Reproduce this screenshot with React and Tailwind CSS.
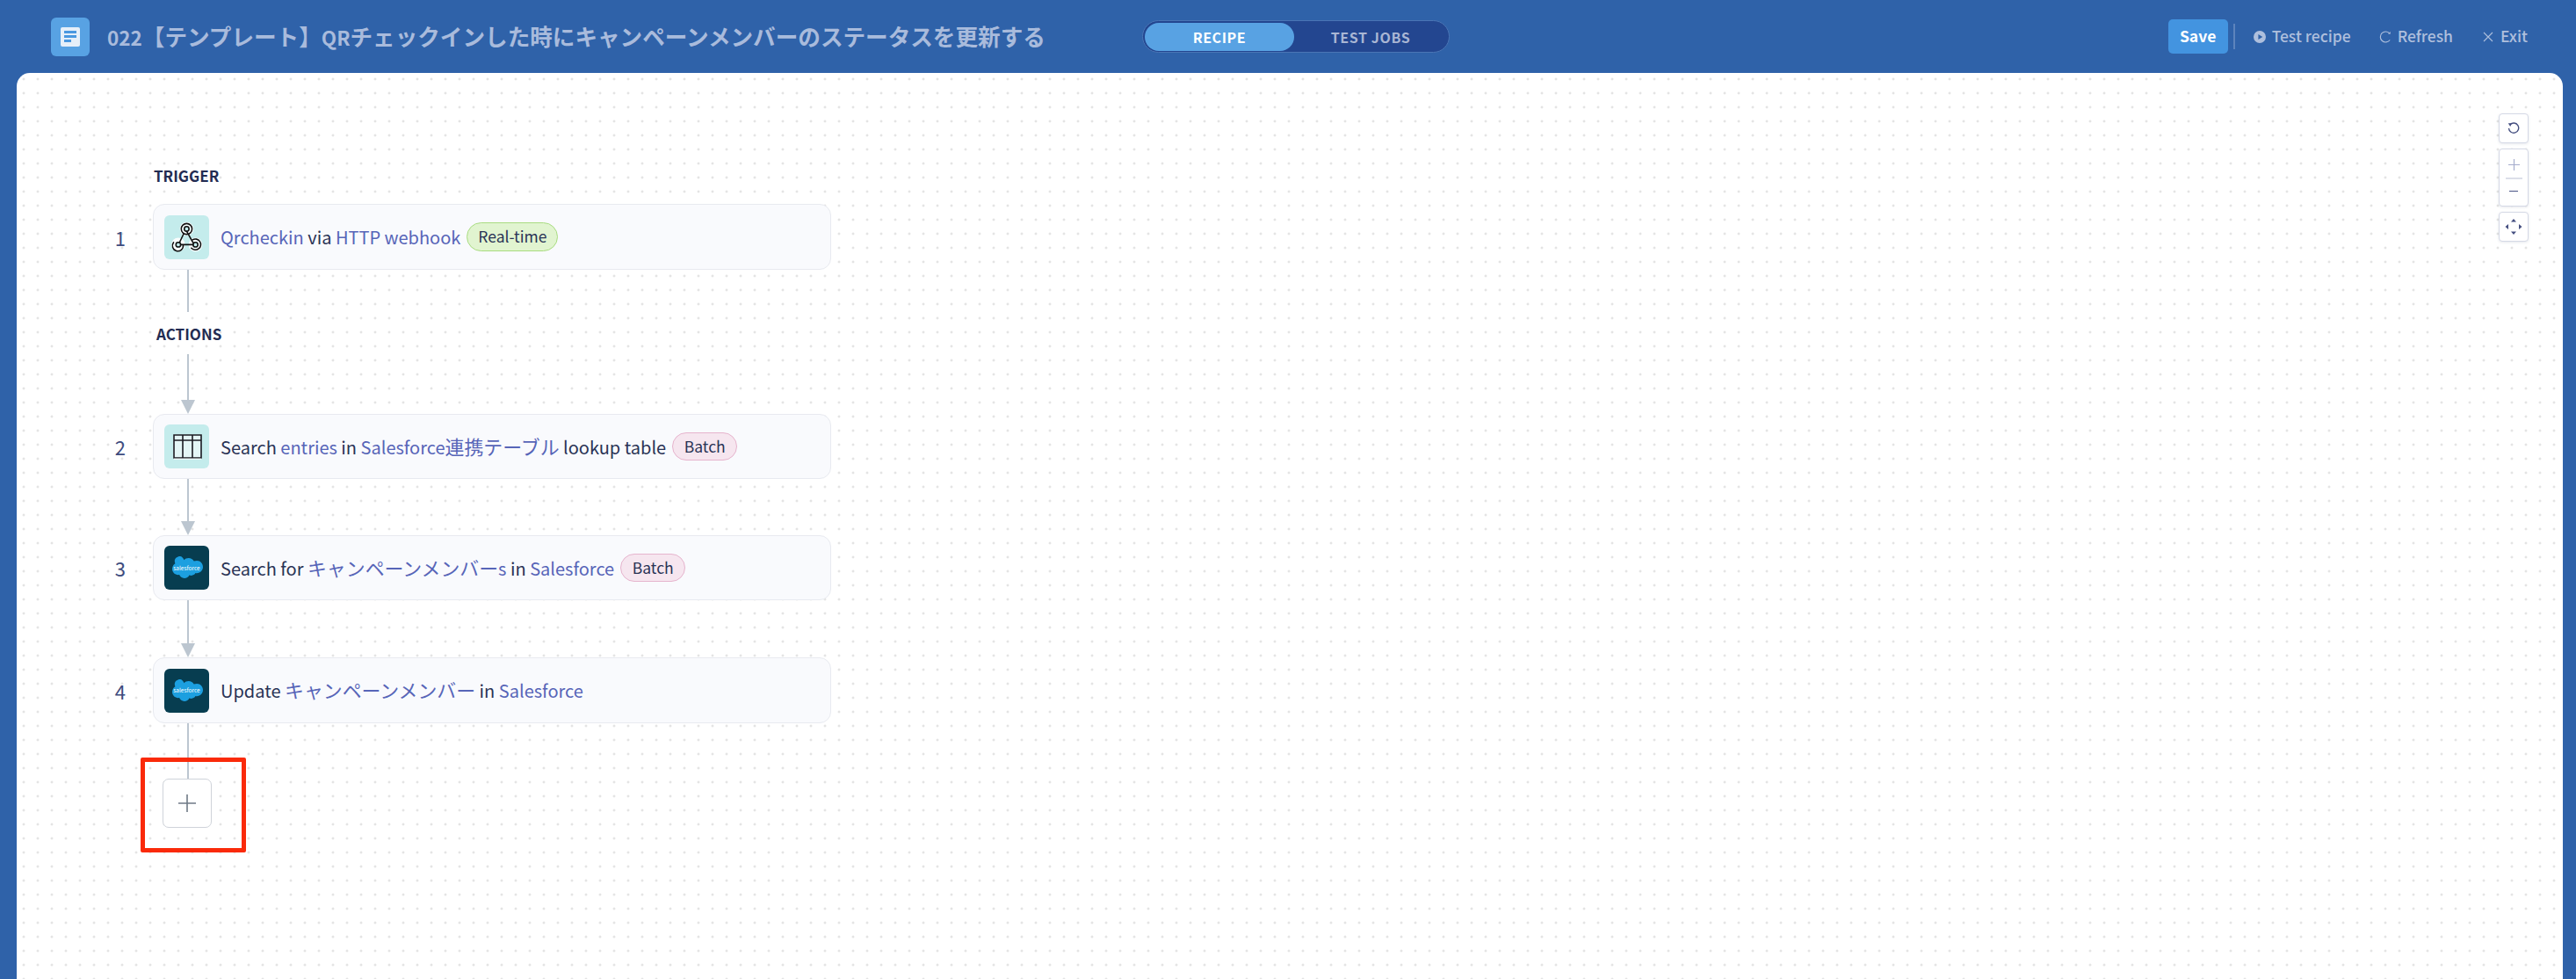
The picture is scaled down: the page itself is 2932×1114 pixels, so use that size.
import React from "react";

const FONT = "font-['Noto_Sans_CJK_JP','Noto_Sans',sans-serif]";

function Link({ children }) {
  return <span className="text-[#5765b8]">{children}</span>;
}

function J({ children }) {
  return <span className="text-[21.9px]">{children}</span>;
}

function TJ({ children }) {
  return <span className="text-[25.6px]">{children}</span>;
}

function Pill({ children, kind }) {
  const cls =
    kind === "green"
      ? "bg-[#e1f4d0] border-[#a8dc80] w-[104px] h-[33px]"
      : "bg-[#f6e6ef] border-[#e6b4cd] w-[74px] h-[32px]";
  return (
    <span className={`ml-[7px] inline-flex shrink-0 items-center justify-center rounded-full border-[1.5px] text-[17.5px] text-[#2a3355] ${cls}`}>
      {children}
    </span>
  );
}

function WebhookIcon() {
  return (
    <svg width="38" height="38" viewBox="0 0 34 34" fill="none">
      <g stroke="#ffffff" strokeWidth="4" opacity="0.9">
        <circle cx="16.5" cy="8.5" r="5" />
        <circle cx="8" cy="24.5" r="5" />
        <circle cx="25.5" cy="24.5" r="5" />
      </g>
      <g stroke="#111" strokeWidth="1.4" strokeLinecap="round">
        <circle cx="16.5" cy="8.5" r="5.5" />
        <circle cx="16.5" cy="8.5" r="2.4" />
        <path d="M3.2 22.2A5.5 5.5 0 1 0 13 25" />
        <circle cx="8" cy="24.5" r="2.4" />
        <path d="M22.5 19.6A5.5 5.5 0 1 1 21.3 28" />
        <circle cx="25.5" cy="24.5" r="2.4" />
        <path d="M10.4 24.5H23M16.5 10.9L23 22.5M13.5 13.4L9.2 22.4" />
      </g>
    </svg>
  );
}

function TableIcon() {
  return (
    <svg width="34" height="30" viewBox="0 0 34 30" fill="none">
      <rect x="1" y="1.5" width="31.5" height="27" fill="#ffffff" opacity="0.55" />
      <path d="M2 2H33V28H2ZM2 8H33M12 2V28M23 2V28" stroke="#1b1b22" strokeWidth="1.6" />
      <path d="M2 29.2H33" stroke="#ffffff" strokeWidth="1" />
    </svg>
  );
}

function SalesforceIcon() {
  return (
    <div className="relative flex h-[26px] w-[36px] items-center justify-center">
      <svg width="36" height="26" viewBox="0 0 36 26" className="absolute inset-0">
        <path
          d="M14.5 4.2C15.8 2.8 17.6 2 19.6 2c2.6 0 4.9 1.4 6.1 3.6 1-.5 2.2-.7 3.4-.7 4.1 0 6.9 3.3 6.9 7.2s-3 7.2-7 7.2c-.5 0-1-.1-1.5-.2-.9 1.700-2.700 2.800-4.800 2.800-.8 0-1.600-.2-2.300-.5C19.500 23.500 17.300 25 14.800 25c-2.600 0-4.800-1.600-5.700-3.900-.4.1-.8.1-1.200.1C4.100 21.200 1 18.100 1 14.300c0-2.600 1.400-4.800 3.400-6C4 7.300 3.800 6.300 3.800 5.300 3.800 2.400 6.900 0 10 0c1.800 0 3.400 1.700 4.500 4.200z"
          fill="#1c9fe0"
        />
      </svg>
      <span className="relative text-[6.5px] leading-none text-white">salesforce</span>
    </div>
  );
}

function Card({ n, icon, iconBg, h = "h-[74px]", pill, children }) {
  return (
    <div className="flex items-center">
      <div className="w-[74px] pr-[31px] text-right text-[22px] leading-none text-[#3e4c7e]">{n}</div>
      <div className={`flex w-[772px] items-center rounded-[13px] border-[1.5px] border-[#e8eaf0] bg-[#f9fafd] pl-[12px] ${h}`}>
        <div className={`flex h-[50px] w-[51px] shrink-0 items-center justify-center rounded-[6px] ${iconBg}`}>{icon}</div>
        <div className="ml-[13px] flex items-center text-[20px] text-[#2a3355]">
          <span className="whitespace-pre">{children}</span>
          {pill}
        </div>
      </div>
    </div>
  );
}

function Line({ h }) {
  return <div className={`ml-[113px] w-[2px] bg-[#bcc6d0] ${h}`} />;
}

function Arrow() {
  return (
    <svg width="16" height="16" viewBox="0 0 16 16" className="ml-[106px] block">
      <path d="M0 0H16L8 16Z" fill="#bcc6d0" />
    </svg>
  );
}

function Label({ children, className }) {
  return (
    <div className={`flex h-[24px] items-center text-[17px] font-bold leading-none text-[#232c52] ${className}`}>
      {children}
    </div>
  );
}

function Ctl({ children, h = "h-[34px]" }) {
  return (
    <div className={`flex w-[34px] flex-col items-center justify-center rounded-[4px] border-[1.5px] border-[#d5d9e6] bg-white shadow-[0_1px_3px_rgba(60,70,110,0.12)] ${h}`}>
      {children}
    </div>
  );
}

export default function App() {
  return (
    <div className={`h-[1114px] w-[2932px] overflow-hidden bg-[#2f62a9] ${FONT}`}>
      <header className="flex h-[83px] items-center">
        <div className="flex w-[1300px] items-center pl-[58px]">
          <div className="flex h-[44px] w-[44px] items-center justify-center rounded-[6px] bg-[#58a2e3]">
            <div className="flex h-[22px] w-[22px] flex-col justify-center gap-[2px] rounded-[2px] bg-[#e6eff9] pl-[4px]">
              <div className="h-[3px] w-[14px] bg-[#4a98e0]" />
              <div className="h-[3px] w-[14px] bg-[#4a98e0]" />
              <div className="h-[3px] w-[8px] bg-[#4a98e0]" />
            </div>
          </div>
          <div className="ml-[20px] whitespace-pre text-[22.5px] font-bold text-[#a9bbdc]">
            022<TJ>【テンプレート】</TJ>QR<TJ>チェックインした時にキャンペーンメンバーのステータスを更新する</TJ>
          </div>
        </div>
        <div className="flex h-[37px] w-[350px] items-center rounded-full border border-[#4a75b5] bg-[#234690] p-[2px]">
          <div className="flex h-[32px] w-[170px] items-center justify-center rounded-full bg-[#58a2e3] text-[16px] font-bold tracking-[0.6px] text-white">
            RECIPE
          </div>
          <div className="flex flex-1 items-center justify-center text-[16px] font-bold tracking-[0.6px] text-[#a9b6d4]">
            TEST JOBS
          </div>
        </div>
        <div className="ml-auto flex items-center pr-[55px] text-[17.5px] font-medium text-[#aebfdd]">
          <div className="flex h-[39px] w-[68px] items-center justify-center rounded-[5px] bg-[#4394e0] font-bold text-white">Save</div>
          <div className="ml-[6px] h-[29px] w-[2px] bg-[#5d84bd]" />
          <svg width="14" height="14" viewBox="0 0 14 14" className="ml-[21px]">
            <path fillRule="evenodd" d="M7 0a7 7 0 1 0 0 14A7 7 0 0 0 7 0ZM5.4 3.9v6.2L10.3 7Z" fill="#aebfdd" />
          </svg>
          <span className="ml-[7px]">Test recipe</span>
          <svg width="14" height="14" viewBox="0 0 14 14" fill="none" className="ml-[32px]">
            <path d="M12 3.2A6 6 0 1 0 12.2 10.5" stroke="#aebfdd" strokeWidth="1.2" />
            <path d="M9.8 3.8H13V.8" fill="#aebfdd" opacity="0.7" />
          </svg>
          <span className="ml-[7px]">Refresh</span>
          <svg width="12" height="12" viewBox="0 0 12 12" fill="none" className="ml-[34px]">
            <path d="M1 1L11 11M11 1L1 11" stroke="#aebfdd" strokeWidth="1.1" />
          </svg>
          <span className="ml-[8px]">Exit</span>
        </div>
      </header>

      <main className="relative ml-[19px] mr-[15px] h-[1031px] rounded-t-[15px] bg-white bg-[radial-gradient(circle,#e4e4e4_1.3px,transparent_1.7px)] bg-[size:16px_16px] bg-[position:0_-1px] pt-[104px]">
        <div className="absolute right-[39px] top-[46px] flex flex-col gap-[6px]">
          <Ctl>
            <svg width="14" height="14" viewBox="0 0 14 14" fill="none">
              <path d="M3 2.800A5.600 5.600 0 1 1 1.500 7" stroke="#454f80" strokeWidth="1.4" />
              <path d="M.8 1.200L5 1.200L3.200 5Z" fill="#454f80" />
            </svg>
          </Ctl>
          <Ctl h="h-[66px]">
            <svg width="13" height="13" viewBox="0 0 13 13">
              <path d="M6.500 0V13M0 6.500H13" stroke="#a6aecd" strokeWidth="1.2" />
            </svg>
            <div className="my-[8px] h-[1.5px] w-[19px] bg-[#dcdfe9]" />
            <div className="my-[5px] h-[1.5px] w-[10px] bg-[#4a5585]" />
          </Ctl>
          <Ctl>
            <svg width="20" height="20" viewBox="0 0 20 20" fill="#454f80">
              <path d="M10 1L13 4.500H7ZM10 19L13 15.500H7ZM.5 10L4 7V13ZM19.500 10L16 7V13Z" />
            </svg>
          </Ctl>
        </div>

        <div className="ml-[81px]">
          <Label className="ml-[75px]">TRIGGER</Label>
          <div className="mt-[21px]">
            <Card n="1" h="h-[75px]" iconBg="bg-[#c4ecec]" icon={<WebhookIcon />} pill={<Pill kind="green">Real-time</Pill>}>
              <Link>Qrcheckin</Link> via <Link>HTTP webhook</Link>
            </Card>
          </div>
          <Line h="h-[48px]" />
          <Label className="ml-[78px] mt-[12px]">ACTIONS</Label>
          <div className="mt-[12px]" />
          <Line h="h-[52px]" />
          <Arrow />
          <Card n="2" iconBg="bg-[#c4ecec]" icon={<TableIcon />} pill={<Pill>Batch</Pill>}>
            Search <Link>entries</Link> in <Link>Salesforce<J>連携テーブル</J></Link> lookup table
          </Card>
          <Line h="h-[48px]" />
          <Arrow />
          <Card n="3" iconBg="bg-[#073d50]" icon={<SalesforceIcon />} pill={<Pill>Batch</Pill>}>
            Search for <Link><J>キャンペーンメンバー</J>s</Link> in <Link>Salesforce</Link>
          </Card>
          <Line h="h-[49px]" />
          <Arrow />
          <Card n="4" h="h-[75px]" iconBg="bg-[#073d50]" icon={<SalesforceIcon />}>
            Update <Link><J>キャンペーンメンバー</J></Link> in <Link>Salesforce</Link>
          </Card>
          <Line h="h-[63px]" />
          <div className="relative ml-[85px] w-[56px]">
            <button className="flex h-[56px] w-[56px] items-center justify-center rounded-[7px] border-[1.5px] border-[#cfd3da] bg-white">
              <svg width="20" height="20" viewBox="0 0 20 20">
                <path d="M10 0V20M0 10H20" stroke="#6f7a86" strokeWidth="1.6" />
              </svg>
            </button>
            <div className="absolute -left-[25px] -top-[24px] h-[108px] w-[120px] rounded-[2px] border-[5px] border-[#fa2a0a]" />
          </div>
        </div>
      </main>
    </div>
  );
}
